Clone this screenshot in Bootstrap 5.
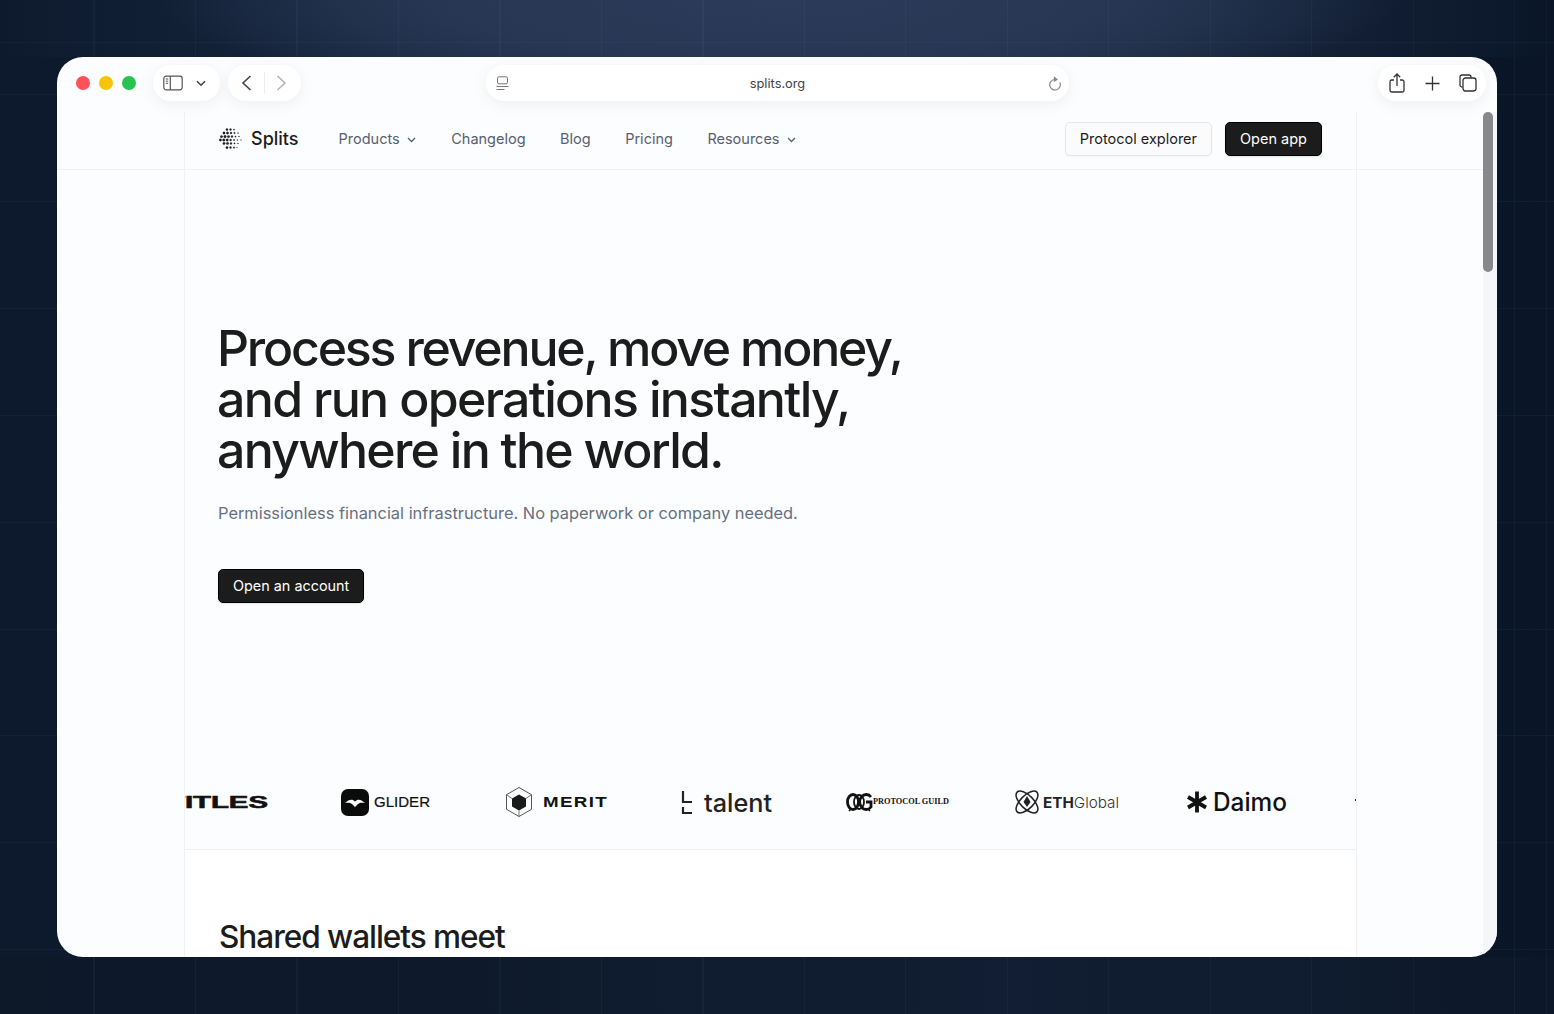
<!DOCTYPE html>
<html lang="en">
<head>
    <meta charset="utf-8">
    <title>Splits</title>
    <meta name="viewport" content="width=device-width, initial-scale=1">
    <link href="https://cdn.jsdelivr.net/npm/bootstrap@5.3.2/dist/css/bootstrap.min.css" rel="stylesheet">
    <style>
        html, body { height: 100%; }
        body {
            margin: 0;
            padding: 57px;
            overflow: hidden;
            font-family: Inter, "Liberation Sans", sans-serif;
            color: #1c1c1c;
            background-color: #0c1829;
            background-image:
                repeating-linear-gradient(90deg, rgba(120,150,200,.06) 0 1px, transparent 1px 101.5px),
                repeating-linear-gradient(180deg, rgba(120,150,200,.06) 0 1px, transparent 1px 106.9px),
                radial-gradient(ellipse 620px 110px at 50% 0, #2b3c5a 0%, #273753 55%, rgba(39,55,83,0) 100%),
                linear-gradient(90deg, #0d1a2e 0%, #1c2b45 35%, #24344f 55%, #1a2740 75%, #0a1628 100%),
                linear-gradient(90deg, #0d1929 0%, #0e1a2c 30%, #111e33 65%, #0f1b2e 85%, #0c1829 100%),
                linear-gradient(90deg, #0d1a2e 0%, #0a1628 100%);
            background-position: -8px 0, 0 94px, 0 0, 0 0, 0 100%, 0 0;
            background-size: auto, auto, auto, 100% 57px, 100% 57px, 100% 100%;
            background-repeat: repeat, repeat, no-repeat, no-repeat, no-repeat, no-repeat;
        }
        .browser-window {
            position: relative;
            width: 1440px;
            height: 900px;
            border-radius: 26px;
            overflow: hidden;
            background: #fcfdfe;
        }
        .browser-bar { height: 55px; padding: 8px 11px 0 19px; }
        .traffic-group { gap: 9px; height: 36px; }
        .traffic { width: 14px; height: 14px; border-radius: 50%; }
        .traffic-red { background: #ff5257; }
        .traffic-yellow { background: #f8c409; }
        .traffic-green { background: #28c44f; }
        .bar-pill {
            height: 36px;
            border-radius: 18px;
            background: #fff;
            box-shadow: 0 3px 14px rgba(120,130,160,.12);
        }
        .pill-sidebar { width: 67px; margin-left: 17px; padding: 0 14px 0 10px; }
        .pill-nav { width: 73px; margin-left: 8px; padding: 0 14px 0 13px; }
        .pill-nav i { width: 1px; height: 22px; background: #eceef2; }
        .pill-address { width: 583px; margin-left: 185px; padding: 0 7px 0 10px; font-size: 12.8px; color: #3f4248; }
        .pill-address span { padding: 2px 2px 0 0; }
        .pill-actions { width: 108px; padding: 0 9px 0 11px; }
        .scroll-thumb {
            position: absolute;
            top: 55px;
            right: 4px;
            width: 10px;
            height: 160px;
            border-radius: 5px;
            background: #87888b;
        }
        .scroll-track {
            position: absolute;
            top: 55px;
            bottom: 0;
            right: 0;
            width: 14px;
            background: #f5f6f9;
        }
        .site-nav { border-bottom: 1px solid #f0f1f4; height: 58px; }
        .frame-col {
            width: 1173px;
            margin-left: 127px;
            border-left: 1px solid #f0f1f4;
            border-right: 1px solid #f0f1f4;
        }
        .site-nav .frame-col { height: 100%; padding: 0 34px 4px; }
        .brand-name { font-size: 18px; font-weight: 500; margin-left: 8px; margin-right: 40px; }
        .site-link { font-size: 14.5px; color: #586070; text-decoration: none; margin-right: 34.5px; white-space: nowrap; }
        .site-link-first { margin-right: 35.5px; }
        .site-link svg { margin-left: 3px; vertical-align: 1px; }
        .btn-light-outline, .btn-dark-solid {
            height: 34px;
            padding: 0 14px;
            font-size: 14.5px;
            line-height: 32px;
            border-radius: 5px;
        }
        .btn-light-outline { background: #fbfbfc; border: 1px solid #e5e6e9; color: #1c1c1c; box-shadow: 0 1px 2px rgba(0,0,0,.04); }
        .btn-dark-solid { background: #1c1c1c; border: 1px solid #000; color: #fff; box-shadow: 0 1px 2px rgba(0,0,0,.1); }
        .btn-dark-solid:hover { background: #1c1c1c; color: #fff; }
        .hero { padding: 153px 33px 0; height: 612px; }
        .hero-title {
            font-family: Inter, "Liberation Sans", sans-serif;
            font-size: 50px;
            line-height: 51px;
            font-weight: 450;
            margin: 0 0 25px -1px;
            color: #1c1c1c;
        }
        .hero-line { display: block; white-space: nowrap; }
        .hero-line-a { letter-spacing: -2.21px; }
        .hero-line-b { letter-spacing: -1.67px; }
        .hero-line-c { letter-spacing: -1.74px; }
        .hero-sub { font-size: 16.4px; line-height: 24px; color: #667080; margin: 0 0 44px; }
        .btn-hero { font-size: 14.4px; }
        .logo-strip { height: 68px; overflow: hidden; border-bottom: 1px solid #f0f1f4; }
        .logo-track { margin-left: -18px; }
        .logo-track svg { flex: none; display: block; }
        .logo-track text { fill: #111; }
        .after-strip { background: #fff; height: 200px; padding: 69px 34px 0; }
        .after-title { font-family: Inter, "Liberation Sans", sans-serif; font-size: 31.6px; line-height: 36px; font-weight: 450; letter-spacing: -1.06px; color: #1c1c1c; }
    </style>
</head>
<body>
    <div class="browser-window">
        <div class="scroll-track"></div>
        <!-- barre du navigateur -->
        <div class="browser-bar d-flex align-items-start">
            <div class="traffic-group d-flex align-items-center">
                <span class="traffic traffic-red"></span>
                <span class="traffic traffic-yellow"></span>
                <span class="traffic traffic-green"></span>
            </div>
            <div class="bar-pill pill-sidebar d-flex align-items-center justify-content-between">
                <svg width="20" height="16" viewBox="0 0 20 16" fill="none" stroke="#555" stroke-width="1.2"><rect x=".8" y="1.2" width="18.4" height="13.6" rx="2.5"/><path d="M7.3 1.2v13.6"/><path d="M2.8 4h2.4M2.8 6.2h2.4M2.8 8.4h2.4" stroke-width="1"/></svg>
                <svg width="10" height="7" viewBox="0 0 10 7" fill="none" stroke="#444" stroke-width="1.6"><path d="M1 1.200l4 4 4-4"/></svg>
            </div>
            <div class="bar-pill pill-nav d-flex align-items-center justify-content-between">
                <svg width="11" height="16" viewBox="0 0 11 16" fill="none" stroke="#444" stroke-width="1.6"><path d="M9.500 1L2 8l7.500 7"/></svg>
                <i></i>
                <svg width="11" height="16" viewBox="0 0 11 16" fill="none" stroke="#b5b6b9" stroke-width="1.6"><path d="M1.500 1L9 8l-7.500 7"/></svg>
            </div>
            <div class="bar-pill pill-address d-flex align-items-center justify-content-between">
                <svg width="13" height="15" viewBox="0 0 13 15" fill="none" stroke="#777" stroke-width="1"><rect x="1.500" y=".8" width="10" height="7" rx="1.500"/><path d="M.5 10.500h12M.5 13.500h8"/></svg>
                <span>splits.org</span>
                <svg width="14" height="15" viewBox="0 0 14 15" fill="none" stroke="#888" stroke-width="1.2"><path d="M11.800 6.500A5.300 5.300 0 1 1 6.500 3.500"/><path d="M5.800 .3L10 3.400 5.800 6.300z" fill="#888" stroke="none"/></svg>
            </div>
            <div class="bar-pill pill-actions ms-auto d-flex align-items-center justify-content-between">
                <svg width="16" height="20" viewBox="0 0 16 20" fill="none" stroke="#333" stroke-width="1.3"><path d="M5 7H2.800A1.800 1.800 0 0 0 1 8.800v8.400A1.800 1.800 0 0 0 2.800 19h10.400a1.800 1.800 0 0 0 1.800-1.800V8.800A1.800 1.800 0 0 0 13.200 7H11"/><path d="M8 13V1.200M4.800 4.200L8 1l3.200 3.200"/></svg>
                <svg width="15" height="15" viewBox="0 0 15 15" fill="none" stroke="#333" stroke-width="1.3"><path d="M7.500 .5v14M.5 7.500h14"/></svg>
                <svg width="18" height="18" viewBox="0 0 18 18" fill="none" stroke="#333" stroke-width="1.3"><path d="M3.500 13H3a2 2 0 0 1-2-2V3a2 2 0 0 1 2-2h7a2 2 0 0 1 2 2v1"/><rect x="4" y="4" width="13" height="13" rx="2.400"/></svg>
            </div>
        </div>

        <!-- menu du site -->
        <header class="site-nav">
            <div class="frame-col d-flex align-items-center">
                <svg width="24" height="22" viewBox="0 0 24 22" fill="#1c1c1c" stroke="#1c1c1c" stroke-width=".3">
                    <circle cx="8" cy="1.600" r="1.100"/><circle cx="11.500" cy="1.600" r="1"/><circle cx="15" cy="1.600" r=".7"/>
                    <circle cx="5" cy="5" r="1.200"/><circle cx="8.500" cy="5" r="1.200"/><circle cx="12" cy="5" r="1"/><circle cx="15.500" cy="5" r=".8"/><circle cx="19" cy="5" r=".5"/>
                    <circle cx="2.500" cy="8.600" r="1.200"/><circle cx="6" cy="8.600" r="1.300"/><circle cx="9.500" cy="8.600" r="1.200"/><circle cx="13" cy="8.600" r="1"/><circle cx="16.500" cy="8.600" r=".7"/><circle cx="20" cy="8.600" r=".5"/>
                    <circle cx="1.400" cy="12" r="1.200"/><circle cx="4.800" cy="12" r="1.300"/><circle cx="8.200" cy="12" r="1.200"/><circle cx="11.600" cy="12" r="1"/><circle cx="15" cy="12" r=".7"/><circle cx="18.400" cy="12" r=".5"/><circle cx="22" cy="12" r=".4"/>
                    <circle cx="5" cy="15.400" r="1.200"/><circle cx="8.500" cy="15.400" r="1.200"/><circle cx="12" cy="15.400" r="1"/><circle cx="15.500" cy="15.400" r=".7"/><circle cx="19" cy="15.400" r=".5"/>
                    <circle cx="8" cy="19.600" r="1.200"/><circle cx="11.500" cy="19.600" r="1"/><circle cx="15" cy="19.600" r=".8"/><circle cx="18" cy="19.600" r=".4"/>
                </svg>
                <span class="brand-name">Splits</span>
                <a class="site-link site-link-first" href="#">Products <svg width="9" height="6" viewBox="0 0 9 6" fill="none" stroke="#586070" stroke-width="1.3"><path d="M1 1l3.500 3.500L8 1"/></svg></a>
                <a class="site-link" href="#">Changelog</a>
                <a class="site-link" href="#">Blog</a>
                <a class="site-link" href="#">Pricing</a>
                <a class="site-link" href="#">Resources <svg width="9" height="6" viewBox="0 0 9 6" fill="none" stroke="#586070" stroke-width="1.3"><path d="M1 1l3.500 3.500L8 1"/></svg></a>
                <div class="ms-auto d-flex" style="gap:13px">
                    <a class="btn btn-light-outline" href="#">Protocol explorer</a>
                    <a class="btn btn-dark-solid" href="#">Open app</a>
                </div>
            </div>
        </header>

        <main class="frame-col">
            <section class="hero">
                <h1 class="hero-title"><span class="hero-line hero-line-a">Process revenue, move money,</span><span class="hero-line hero-line-b">and run operations instantly,</span><span class="hero-line hero-line-c">anywhere in the world.</span></h1>
                <p class="hero-sub">Permissionless financial infrastructure. No paperwork or company needed.</p>
                <a class="btn btn-dark-solid btn-hero" href="#">Open an account</a>
            </section>

            <!-- logos partenaires -->
            <section class="logo-strip">
                <div class="logo-track d-flex">
                    <svg width="174" height="40" viewBox="0 0 174 40"><text x="0" y="26" font-family="Liberation Sans" font-weight="700" font-size="17" textLength="101" lengthAdjust="spacingAndGlyphs" stroke="#111" stroke-width=".6">TITLES</text></svg>
                    <svg width="164" height="40" viewBox="0 0 164 40">
                        <rect x="0" y="7" width="28" height="27" rx="7" fill="#0b0b0b"/>
                        <path d="M4 21c3-3 6-4 8-3l2 1.500 2-1.500c2-1 5 0 8 3-3-.5-5-.5-7 1l-3 3-3-3c-2-1.500-4-1.500-7-1z" fill="#fff"/>
                        <text x="33" y="25" font-family="Liberation Sans" font-size="14" textLength="56" lengthAdjust="spacingAndGlyphs" stroke="#111" stroke-width=".2">GLIDER</text>
                    </svg>
                    <svg width="175" height="40" viewBox="0 0 175 40">
                        <path d="M14 5.500l12.500 7.200v14.600L14 34.500 1.500 27.300V12.700z" fill="none" stroke="#555" stroke-width="1"/>
                        <path d="M1.500 12.700L7 16.500M26.500 12.700L21 16.500M14 34.500V28.500" stroke="#555" stroke-width=".8"/>
                        <path d="M14 12.500l7 4v8l-7 4-7-4v-8z" fill="#1a1a1a"/>
                        <text x="38" y="25" font-family="Liberation Sans" font-weight="700" font-size="14" textLength="65" lengthAdjust="spacingAndGlyphs" letter-spacing="1">MERIT</text>
                    </svg>
                    <svg width="166" height="40" viewBox="0 0 166 40">
                        <path d="M3 9v11h9M3 25v6h9" fill="none" stroke="#222" stroke-width="2.200"/>
                        <text x="24" y="30" font-family="Inter" font-weight="500" font-size="25" textLength="68" lengthAdjust="spacingAndGlyphs" style="fill:#222">talent</text>
                    </svg>
                    <svg width="169" height="40" viewBox="0 0 169 40">
                        <ellipse cx="7" cy="20" rx="5.500" ry="7.500" fill="none" stroke="#111" stroke-width="2.800"/>
                        <ellipse cx="13" cy="20" rx="5" ry="7" fill="none" stroke="#111" stroke-width="1.800"/>
                        <path d="M25 15a6.500 7.500 0 1 0 0 10v-5h-5" fill="none" stroke="#111" stroke-width="2.800"/>
                        <path d="M5 27l-2 2M22 27l2 2" stroke="#111" stroke-width="1.500"/>
                        <text x="27" y="22" font-family="Liberation Serif" font-weight="700" font-size="8.500" textLength="76" lengthAdjust="spacingAndGlyphs">PROTOCOL GUILD</text>
                    </svg>
                    <svg width="171" height="40" viewBox="0 0 171 40">
                        <g fill="none" stroke="#222" stroke-width="1.500"><ellipse cx="12" cy="20" rx="14" ry="6.500" transform="rotate(45 12 20)"/><ellipse cx="12" cy="20" rx="14" ry="6.500" transform="rotate(-45 12 20)"/></g>
                        <path d="M12 14l3.500 6-3.500 5-3.500-5z" fill="#222"/>
                        <text x="28" y="26" font-family="Inter" font-size="15" textLength="76" lengthAdjust="spacingAndGlyphs" style="fill:#333"><tspan font-weight="700" style="fill:#222">ETH</tspan><tspan font-weight="300">Global</tspan></text>
                    </svg>
                    <svg width="169" height="40" viewBox="0 0 169 40">
                        <g stroke="#111" stroke-width="3.800"><path d="M11 9.500v21M2 15l18 10.500M20 15L2 25.500"/></g>
                        <text x="27" y="29" font-family="Inter" font-weight="500" font-size="25" textLength="74" lengthAdjust="spacingAndGlyphs">Daimo</text>
                    </svg>
                    <svg width="60" height="40" viewBox="0 0 60 40"><path d="M0 17h4v2H0z" fill="#333"/></svg>
                </div>
            </section>

            <section class="after-strip">
                <div class="after-title">Shared wallets meet</div>
            </section>
        </main>

        <div class="scroll-thumb"></div>
    </div>

    <footer>
        <script src="https://cdn.jsdelivr.net/npm/bootstrap@5.3.2/dist/js/bootstrap.bundle.min.js"></script>
    </footer>
</body>
</html>
